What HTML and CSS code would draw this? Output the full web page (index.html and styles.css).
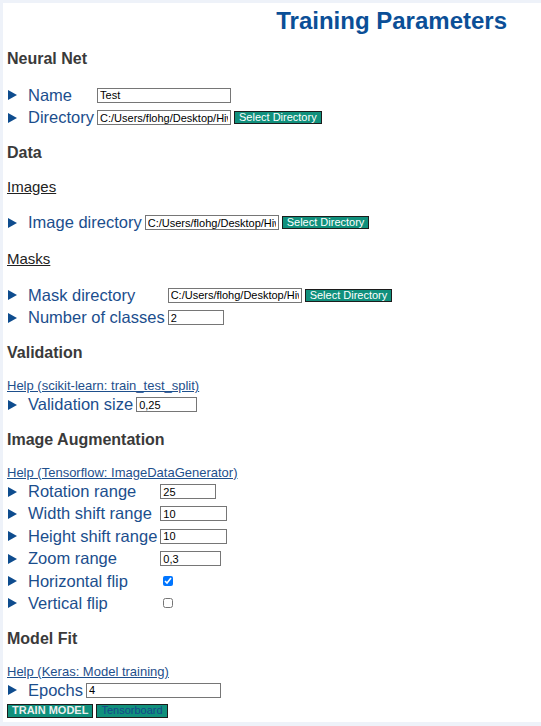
FILE: index.html
```html
<!DOCTYPE html>
<html lang="en">
<head>
<meta charset="utf-8">
<title>Training Parameters</title>
<link rel="stylesheet" href="styles.css">
</head>
<body>
<div class="panel">
  <h1 class="title">Training Parameters</h1>

  <h2 class="section">Neural Net</h2>
  <div class="form">
    <div class="label"><svg class="tri" viewBox="0 0 9 10"><polygon points="0,0 9,5 0,10"/></svg>Name</div>
    <input class="field w134" type="text" value="Test">
    <span></span>
    <div class="label"><svg class="tri" viewBox="0 0 9 10"><polygon points="0,0 9,5 0,10"/></svg>Directory</div>
    <input class="field w134" type="text" value="C:/Users/flohg/Desktop/Hiwi/Segmentation">
    <button class="btn">Select Directory</button>
  </div>

  <h2 class="section">Data</h2>
  <h3 class="sub">Images</h3>
  <div class="form">
    <div class="label"><svg class="tri" viewBox="0 0 9 10"><polygon points="0,0 9,5 0,10"/></svg>Image directory</div>
    <input class="field w134" type="text" value="C:/Users/flohg/Desktop/Hiwi/Segmentation/images">
    <button class="btn">Select Directory</button>
  </div>
  <h3 class="sub">Masks</h3>
  <div class="form">
    <div class="label"><svg class="tri" viewBox="0 0 9 10"><polygon points="0,0 9,5 0,10"/></svg>Mask directory</div>
    <input class="field w134" type="text" value="C:/Users/flohg/Desktop/Hiwi/Segmentation/masks">
    <button class="btn">Select Directory</button>
    <div class="label"><svg class="tri" viewBox="0 0 9 10"><polygon points="0,0 9,5 0,10"/></svg>Number of classes</div>
    <input class="field w56" type="text" value="2">
    <span></span>
  </div>

  <h2 class="section">Validation</h2>
  <a class="help" href="#">Help (scikit-learn: train_test_split)</a>
  <div class="form">
    <div class="label"><svg class="tri" viewBox="0 0 9 10"><polygon points="0,0 9,5 0,10"/></svg>Validation size</div>
    <input class="field w61" type="text" value="0,25">
    <span></span>
  </div>

  <h2 class="section">Image Augmentation</h2>
  <a class="help" href="#">Help (Tensorflow: ImageDataGenerator)</a>
  <div class="form">
    <div class="label"><svg class="tri" viewBox="0 0 9 10"><polygon points="0,0 9,5 0,10"/></svg>Rotation range</div>
    <input class="field w56" type="text" value="25">
    <span></span>
    <div class="label"><svg class="tri" viewBox="0 0 9 10"><polygon points="0,0 9,5 0,10"/></svg>Width shift range</div>
    <input class="field w67" type="text" value="10">
    <span></span>
    <div class="label"><svg class="tri" viewBox="0 0 9 10"><polygon points="0,0 9,5 0,10"/></svg>Height shift range</div>
    <input class="field w67" type="text" value="10">
    <span></span>
    <div class="label"><svg class="tri" viewBox="0 0 9 10"><polygon points="0,0 9,5 0,10"/></svg>Zoom range</div>
    <input class="field w61" type="text" value="0,3">
    <span></span>
    <div class="label"><svg class="tri" viewBox="0 0 9 10"><polygon points="0,0 9,5 0,10"/></svg>Horizontal flip</div>
    <div><input class="check" type="checkbox" checked></div>
    <span></span>
    <div class="label"><svg class="tri" viewBox="0 0 9 10"><polygon points="0,0 9,5 0,10"/></svg>Vertical flip</div>
    <div><input class="check" type="checkbox"></div>
    <span></span>
  </div>

  <h2 class="section">Model Fit</h2>
  <a class="help" href="#">Help (Keras: Model training)</a>
  <div class="form">
    <div class="label"><svg class="tri" viewBox="0 0 9 10"><polygon points="0,0 9,5 0,10"/></svg>Epochs</div>
    <input class="field w135" type="text" value="4">
    <span></span>
  </div>
  <div class="actions">
    <button class="btn big strong">TRAIN MODEL</button>
    <button class="btn big"><span class="btn-link">Tensorboard</span></button>
  </div>
</div>
</body>
</html>
```

FILE: styles.css
```css
html, body {
  margin: 0;
  padding: 0;
}

body {
  background: #eef2f9;
  font-family: "Liberation Sans", Arial, sans-serif;
}

.panel {
  background: #ffffff;
  margin: 3px 0 0 3px;
  height: 719px;
  padding: 4px 0 0 4px;
  box-sizing: border-box;
  overflow: hidden;
}

.title {
  margin: 0;
  font-size: 24px;
  line-height: 28px;
  font-weight: bold;
  color: #0b4f97;
  text-align: right;
  padding-right: 34px;
}

.section {
  margin: 14px 0 16px;
  font-size: 16px;
  line-height: 19px;
  font-weight: bold;
  color: #3a3a3a;
}

.sub {
  margin: 16px 0;
  font-size: 15px;
  line-height: 18px;
  font-weight: normal;
  color: #222222;
  text-decoration: underline;
}

.help {
  display: block;
  width: max-content;
  font-size: 13px;
  line-height: 15.5px;
  color: #1e4f8c;
  text-decoration: underline;
}

.form {
  display: grid;
  grid-template-columns: max-content max-content max-content;
  grid-auto-rows: 22.4px;
  column-gap: 3px;
  align-items: center;
}

.label {
  display: flex;
  align-items: center;
  padding-left: 1px;
  font-size: 16.5px;
  color: #1b4e8d;
  white-space: nowrap;
}

.tri {
  width: 9px;
  height: 10px;
  margin-right: 11px;
  fill: #0e4c8e;
  flex: none;
}

.field {
  box-sizing: border-box;
  height: 15px;
  margin: 0;
  padding: 0 2px;
  border: 1px solid #767676;
  border-radius: 0;
  font-family: "Liberation Sans", Arial, sans-serif;
  font-size: 11px;
  color: #000;
  background: #fff;
  outline: none;
}

.w134 { width: 134px; }
.w135 { width: 135px; }
.w56 { width: 56px; }
.w61 { width: 61px; }
.w67 { width: 67px; }

.check {
  display: block;
  width: 10px;
  height: 10px;
  margin: 0 0 0 3px;
  accent-color: #0075ff;
}

.btn {
  box-sizing: border-box;
  height: 13px;
  margin: 0;
  padding: 0 4px;
  border: 1px solid #1c1c1c;
  border-radius: 0;
  background: #10907c;
  color: #ffffff;
  font-family: "Liberation Sans", Arial, sans-serif;
  font-size: 11px;
  line-height: 11px;
  white-space: nowrap;
}

.actions {
  display: flex;
  gap: 3px;
  margin-top: 2px;
}

.big {
  height: 14px;
}

.strong {
  font-weight: bold;
  color: #eeeeee;
}

.btn-link {
  color: #17468a;
}
```
